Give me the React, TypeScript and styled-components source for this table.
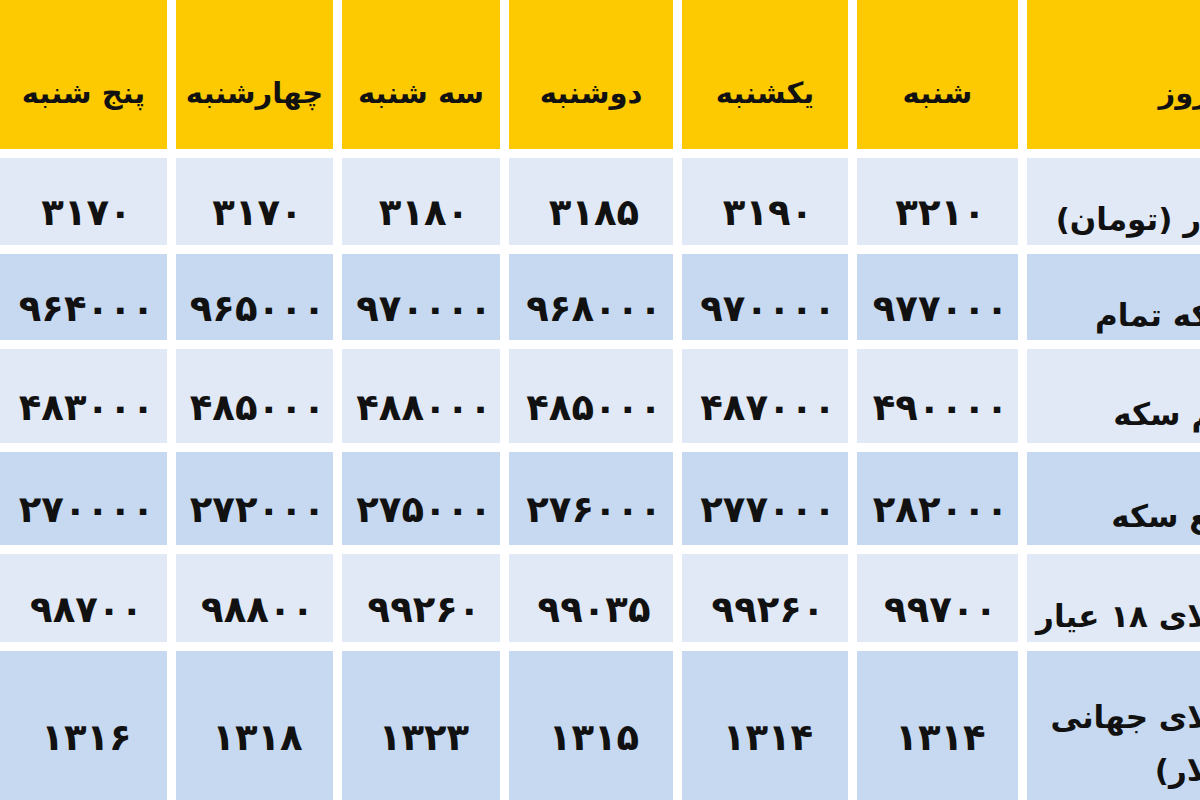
import React from "react";
import styled, { createGlobalStyle } from "styled-components";

const Global = createGlobalStyle`
  html, body { margin: 0; padding: 0; background: #ffffff; overflow: hidden; }
  #root { width: 1200px; height: 800px; }
`;

const Viewport = styled.div`
  width: 1200px;
  height: 800px;
  overflow: hidden;
  background: #ffffff;
`;

const Table = styled.div`
  direction: rtl;
  width: 1262px;
  display: grid;
  grid-template-columns: 235px 161px 166px 164px 158px 157px 167px;
  grid-template-rows: 149px 87px 86px 94px 93px 88px 150px;
  column-gap: 9px;
  row-gap: 9px;
  font-family: "DejaVu Sans", "Noto Sans", sans-serif;
  color: #111111;
`;

const HeaderCell = styled.div<{ $label?: boolean }>`
  background: #fdc900;
  display: flex;
  align-items: center;
  justify-content: ${(p) => (p.$label ? "flex-start" : "center")};
  padding-top: 36px;
  padding-right: ${(p) => (p.$label ? "52px" : "0")};
  box-sizing: border-box;
  font-weight: bold;
  font-size: 29px;
  white-space: nowrap;
`;

const Cell = styled.div<{ $tone: "light" | "blue" }>`
  background: ${(p) => (p.$tone === "light" ? "#e2e9f6" : "#c6d9f0")};
  display: flex;
  align-items: center;
  justify-content: center;
  padding-top: 22px;
  padding-left: 6px;
  box-sizing: border-box;
  font-weight: bold;
  font-size: 37px;
  letter-spacing: 6px;
  white-space: nowrap;
`;

const LabelCell = styled(Cell)`
  justify-content: flex-start;
  padding-top: 36px;
  padding-left: 0;
  padding-right: 22px;
  letter-spacing: 0;
  font-size: 31px;
  line-height: 53px;
  white-space: normal;
  text-align: right;
`;

const days = ["شنبه", "یکشنبه", "دوشنبه", "سه شنبه", "چهارشنبه", "پنج شنبه"];

const rows: { label: React.ReactNode; values: string[] }[] = [
  { label: "دلار (تومان)", values: ["۳۲۱۰", "۳۱۹۰", "۳۱۸۵", "۳۱۸۰", "۳۱۷۰", "۳۱۷۰"] },
  { label: "سکه تمام", values: ["۹۷۷۰۰۰", "۹۷۰۰۰۰", "۹۶۸۰۰۰", "۹۷۰۰۰۰", "۹۶۵۰۰۰", "۹۶۴۰۰۰"] },
  { label: "نیم سکه", values: ["۴۹۰۰۰۰", "۴۸۷۰۰۰", "۴۸۵۰۰۰", "۴۸۸۰۰۰", "۴۸۵۰۰۰", "۴۸۳۰۰۰"] },
  { label: "ربع سکه", values: ["۲۸۲۰۰۰", "۲۷۷۰۰۰", "۲۷۶۰۰۰", "۲۷۵۰۰۰", "۲۷۲۰۰۰", "۲۷۰۰۰۰"] },
  { label: "طلای ۱۸ عیار", values: ["۹۹۷۰۰", "۹۹۲۶۰", "۹۹۰۳۵", "۹۹۲۶۰", "۹۸۸۰۰", "۹۸۷۰۰"] },
  {
    label: (
      <span>
        طلای جهانی
        <br />
        (دلار)
      </span>
    ),
    values: ["۱۳۱۴", "۱۳۱۴", "۱۳۱۵", "۱۳۲۳", "۱۳۱۸", "۱۳۱۶"],
  },
];

export default function App() {
  return (
    <Viewport>
      <Global />
      <Table>
        <HeaderCell $label>روز</HeaderCell>
        {days.map((d) => (
          <HeaderCell key={d}>{d}</HeaderCell>
        ))}
        {rows.map((r, i) => {
          const tone = i % 2 === 0 ? "light" : "blue";
          return (
            <React.Fragment key={i}>
              <LabelCell $tone={tone}>{r.label}</LabelCell>
              {r.values.map((v, j) => (
                <Cell key={j} $tone={tone}>
                  {v}
                </Cell>
              ))}
            </React.Fragment>
          );
        })}
      </Table>
    </Viewport>
  );
}
